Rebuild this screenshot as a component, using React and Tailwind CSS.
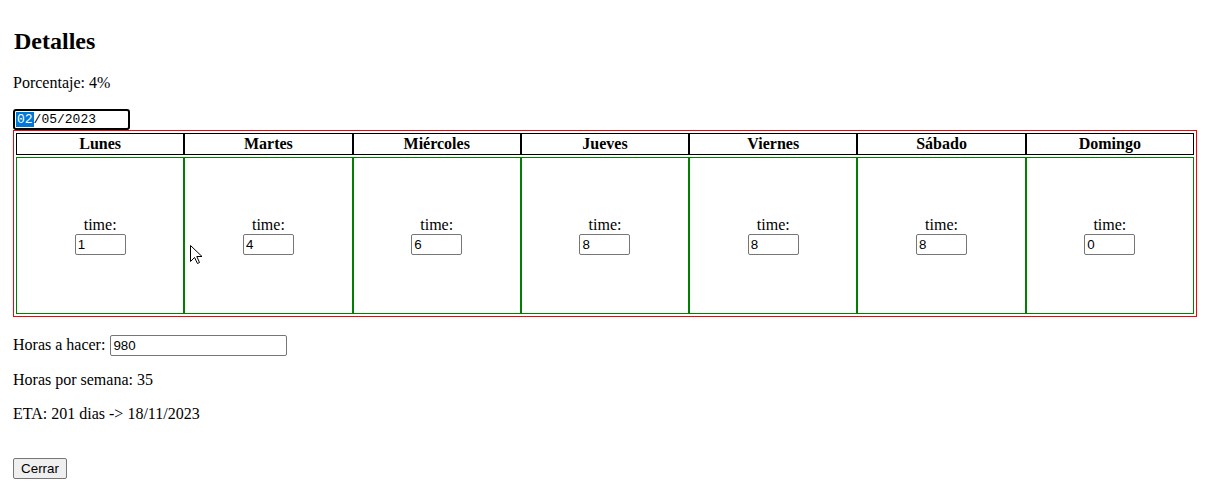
const days = [
  { name: 'Lunes', time: '1' },
  { name: 'Martes', time: '4' },
  { name: 'Miércoles', time: '6' },
  { name: 'Jueves', time: '8' },
  { name: 'Viernes', time: '8' },
  { name: 'Sábado', time: '8' },
  { name: 'Domingo', time: '0' },
]

const inputClass =
  'rounded-[2px] border border-[#767676] bg-white px-[2px] text-[13.33px] leading-[19px] text-black outline-none font-["Liberation_Sans",Arial,sans-serif]'

function Cursor() {
  return (
    <svg
      className="pointer-events-none absolute left-[190px] top-[245px]"
      width="13"
      height="20"
      viewBox="0 0 13 20"
    >
      <path
        d="M0.5 0.5 L0.5 16.5 L4.5 12.5 L7.5 18.5 L9.5 17.5 L6.8 11.5 L12 11.5 Z"
        fill="#fff"
        stroke="#000"
        strokeWidth="1"
        strokeLinejoin="miter"
      />
    </svg>
  )
}

export default function App() {
  return (
    <div className='relative min-h-[488px] bg-white pl-[13px] pt-[27px] text-black font-["Liberation_Serif","Times_New_Roman",serif]'>
      <h2 className="ml-[1px] text-[24px] font-bold leading-[28px]">Detalles</h2>
      <p className="mt-[19px] text-[16px] leading-[18px]">Porcentaje: 4%</p>

      <div className='mt-[17px] flex h-[21px] w-[117px] items-center rounded-[3px] border-2 border-black pl-[1px] text-[13px] leading-[15px] font-["Liberation_Mono","Courier_New",monospace]'>
        <span className="bg-[#0078d7] px-[1px] text-white">02</span>
        <span>/05/2023</span>
      </div>

      <div className="w-[1184px] border border-[#ff0000] p-[2px]">
        <div className="grid grid-cols-7">
          {days.map(day => (
            <div
              key={day.name}
              className="flex h-[22px] items-center justify-center border border-black text-[16px] font-bold leading-[18px]"
            >
              {day.name}
            </div>
          ))}
        </div>
        <div className="mt-[2px] grid grid-cols-7">
          {days.map(day => (
            <div
              key={day.name}
              className="flex h-[157px] flex-col items-center justify-center border border-[#008000]"
            >
              <span className="text-[16px] leading-[18px]">time:</span>
              <div className={`h-[21px] w-[51px] ${inputClass}`}>{day.time}</div>
            </div>
          ))}
        </div>
      </div>

      <div className="mt-[16px] flex h-[24px] items-center text-[16px] leading-[18px]">
        <span>Horas a hacer:</span>
        <div className={`ml-[5px] h-[21px] w-[177px] ${inputClass}`}>980</div>
      </div>

      <p className="mt-[14px] text-[16px] leading-[18px]">Horas por semana: 35</p>
      <p className="mt-[16px] text-[16px] leading-[18px]">ETA: 201 dias -&gt; 18/11/2023</p>

      <button className='mt-[35px] flex h-[21px] w-[54px] items-center justify-center rounded-[2px] border border-[#767676] bg-[#efefef] text-[13.33px] leading-[15px] text-black font-["Liberation_Sans",Arial,sans-serif]'>
        Cerrar
      </button>

      <Cursor />
    </div>
  )
}
